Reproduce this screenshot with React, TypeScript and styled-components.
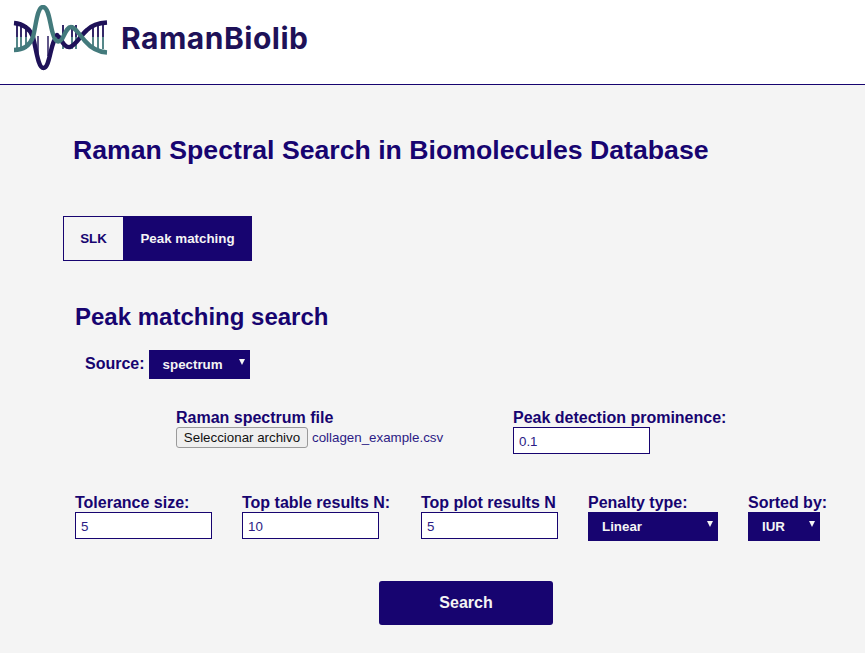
import React from 'react'
import styled, { createGlobalStyle } from 'styled-components'

const navy = '#170470'
const teal = '#437a7c'
const ink = '#1e1158'
const paper = '#f4f4f4'

const GlobalStyle = createGlobalStyle`
  html, body {
    margin: 0;
    padding: 0;
    background: ${paper};
    font-family: "Liberation Sans", Arial, sans-serif;
    color: ${navy};
  }
  * {
    box-sizing: border-box;
  }
`

const Page = styled.div`
  width: 865px;
  height: 653px;
  overflow: hidden;
`

const Header = styled.header`
  height: 85px;
  background: #fff;
  border-bottom: 1px solid ${navy};
  display: flex;
  align-items: flex-start;
  padding: 5px 0 0 13px;
`

const LogoName = styled.span`
  font-family: Inter, "Liberation Sans", sans-serif;
  font-weight: 700;
  font-size: 30px;
  letter-spacing: 0.5px;
  line-height: 34px;
  color: ${ink};
  margin: 16px 0 0 13px;
`

const Main = styled.main`
  display: flex;
  flex-direction: column;
  align-items: flex-start;
`

const Title = styled.h1`
  margin: 48px 0 0 73px;
  font-size: 26.67px;
  line-height: 34px;
  font-weight: 700;
`

const Tabs = styled.div`
  display: flex;
  margin: 49px 0 0 63px;
`

const Tab = styled.div<{ $active?: boolean }>`
  height: 45px;
  display: flex;
  align-items: center;
  justify-content: center;
  font-size: 13.33px;
  font-weight: 700;
  border: 1px solid ${navy};
  width: ${p => (p.$active ? '129px' : '61px')};
  margin-left: ${p => (p.$active ? '-1px' : '0')};
  background: ${p => (p.$active ? navy : 'transparent')};
  color: ${p => (p.$active ? paper : navy)};
`

const Subtitle = styled.h2`
  margin: 42px 0 0 75px;
  font-size: 24px;
  line-height: 28px;
  font-weight: 700;
`

const SourceRow = styled.div`
  display: flex;
  align-items: flex-start;
  gap: 4px;
  margin: 19px 0 0 85px;
`

const SourceLabel = styled.label`
  font-size: 16px;
  line-height: 27px;
  font-weight: 700;
`

const Label = styled.label`
  display: block;
  font-size: 16px;
  line-height: 18px;
  font-weight: 700;
  white-space: nowrap;
`

const Select = styled.div<{ $width: number }>`
  position: relative;
  width: ${p => p.$width}px;
  height: 29px;
  background: ${navy};
  color: ${paper};
  font-size: 13.33px;
  font-weight: 700;
  line-height: 29px;
  padding-left: 14px;

  &::after {
    content: '';
    position: absolute;
    right: 5px;
    top: 9px;
    border-left: 3px solid transparent;
    border-right: 3px solid transparent;
    border-top: 6px solid ${paper};
  }
`

const UploadRow = styled.div`
  display: flex;
  margin: 30px 0 0 176px;
`

const FileField = styled.div`
  width: 337px;
`

const FileLine = styled.div`
  display: flex;
  align-items: center;
  gap: 4px;
`

const FileButton = styled.button`
  width: 132px;
  height: 21px;
  padding: 0;
  font-family: "Liberation Sans", Arial, sans-serif;
  font-size: 13.33px;
  color: #111;
  background: #efefef;
  border: 1px solid #9a9a9a;
  border-radius: 3px;
`

const FileName = styled.span`
  font-size: 13.33px;
  line-height: 21px;
  color: #2c1b85;
`

const TextInput = styled.div`
  width: 137px;
  height: 27px;
  background: #fff;
  border: 1px solid ${navy};
  color: #2c1b85;
  font-size: 13.33px;
  line-height: 27px;
  padding-left: 5px;
`

const ParamsRow = styled.div`
  display: flex;
  align-items: flex-start;
  margin: 40px 0 0 75px;
  gap: 30px;
`

const Param = styled.div<{ $width?: number }>`
  width: ${p => (p.$width ? `${p.$width}px` : 'auto')};
`

const SearchButton = styled.button`
  align-self: flex-start;
  width: 174px;
  height: 44px;
  margin: 40px 0 0 379px;
  background: ${navy};
  color: ${paper};
  border: none;
  border-radius: 3px;
  font-family: "Liberation Sans", Arial, sans-serif;
  font-size: 16px;
  font-weight: 700;
`

const rungs = [17, 21, 26, 63, 72, 76, 93, 98, 103]

// viewBox is in page coordinates so the strands can be read straight off the screenshot
const Logo: React.FC = () => (
  <svg width="95" height="66" viewBox="13 5 95 66" fill="none">
    {rungs.map(x => (
      <g key={x} strokeWidth="1.8">
        <path d={`M${x} 25V37`} stroke={ink} />
        <path d={`M${x} 37V49`} stroke={teal} />
      </g>
    ))}
    <path d="M38 36V56M48 36V56" stroke={ink} strokeWidth="1.4" />
    <path
      d="M14 23C24 24 30 29 33 37C36 48 38 68 43.5 68C49 68 50 50 54 41C56 36 58 35 60 38C63 44 66 48 70 47C76 45 80 36 87 30C92 25 99 23 107 22.5"
      stroke={ink}
      strokeWidth="4.4"
    />
    <path
      d="M14 50C24 50 30 45 33 37C36 26 37 7 43 7C49 7 50 25 53 34C55 41 58 44 62 39C65 34 67 27 71 27C75 27 79 34 85 41C91 48 98 52 107 52.5"
      stroke={teal}
      strokeWidth="4.4"
    />
    <circle cx="57" cy="35" r="2.2" fill={ink} />
  </svg>
)

const App: React.FC = () => (
  <Page>
    <GlobalStyle />
    <Header>
      <Logo />
      <LogoName>RamanBiolib</LogoName>
    </Header>
    <Main>
      <Title>Raman Spectral Search in Biomolecules Database</Title>
      <Tabs>
        <Tab>SLK</Tab>
        <Tab $active>Peak matching</Tab>
      </Tabs>
      <Subtitle>Peak matching search</Subtitle>
      <SourceRow>
        <SourceLabel>Source:</SourceLabel>
        <Select $width={101}>spectrum</Select>
      </SourceRow>
      <UploadRow>
        <FileField>
          <Label>Raman spectrum file</Label>
          <FileLine>
            <FileButton>Seleccionar archivo</FileButton>
            <FileName>collagen_example.csv</FileName>
          </FileLine>
        </FileField>
        <div>
          <Label>Peak detection prominence:</Label>
          <TextInput>0.1</TextInput>
        </div>
      </UploadRow>
      <ParamsRow>
        <Param>
          <Label>Tolerance size:</Label>
          <TextInput>5</TextInput>
        </Param>
        <Param $width={149}>
          <Label>Top table results N:</Label>
          <TextInput>10</TextInput>
        </Param>
        <Param>
          <Label>Top plot results N</Label>
          <TextInput>5</TextInput>
        </Param>
        <Param>
          <Label>Penalty type:</Label>
          <Select $width={130}>Linear</Select>
        </Param>
        <Param>
          <Label>Sorted by:</Label>
          <Select $width={72}>IUR</Select>
        </Param>
      </ParamsRow>
      <SearchButton>Search</SearchButton>
    </Main>
  </Page>
)

export default App
